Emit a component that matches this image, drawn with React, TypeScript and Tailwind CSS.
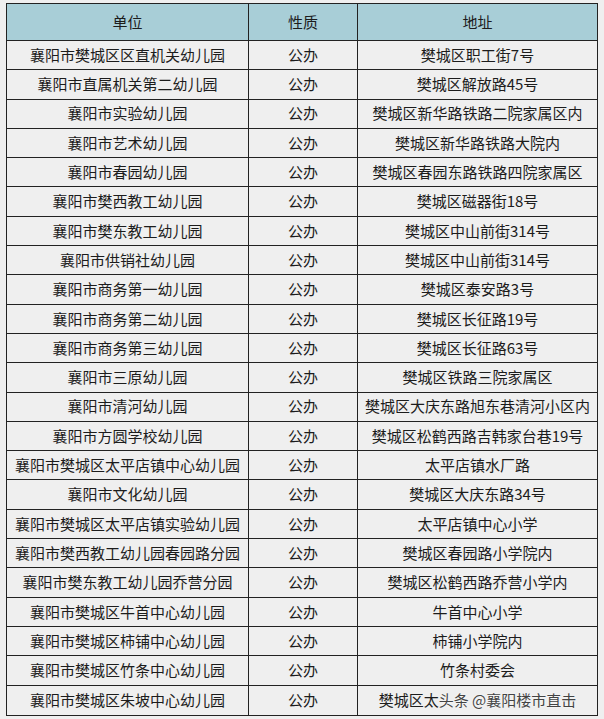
import React from 'react';

const rows: [string, string, string][] = [
  ['襄阳市樊城区区直机关幼儿园', '公办', '樊城区职工街7号'],
  ['襄阳市直属机关第二幼儿园', '公办', '樊城区解放路45号'],
  ['襄阳市实验幼儿园', '公办', '樊城区新华路铁路二院家属区内'],
  ['襄阳市艺术幼儿园', '公办', '樊城区新华路铁路大院内'],
  ['襄阳市春园幼儿园', '公办', '樊城区春园东路铁路四院家属区'],
  ['襄阳市樊西教工幼儿园', '公办', '樊城区磁器街18号'],
  ['襄阳市樊东教工幼儿园', '公办', '樊城区中山前街314号'],
  ['襄阳市供销社幼儿园', '公办', '樊城区中山前街314号'],
  ['襄阳市商务第一幼儿园', '公办', '樊城区泰安路3号'],
  ['襄阳市商务第二幼儿园', '公办', '樊城区长征路19号'],
  ['襄阳市商务第三幼儿园', '公办', '樊城区长征路63号'],
  ['襄阳市三原幼儿园', '公办', '樊城区铁路三院家属区'],
  ['襄阳市清河幼儿园', '公办', '樊城区大庆东路旭东巷清河小区内'],
  ['襄阳市方圆学校幼儿园', '公办', '樊城区松鹤西路吉韩家台巷19号'],
  ['襄阳市樊城区太平店镇中心幼儿园', '公办', '太平店镇水厂路'],
  ['襄阳市文化幼儿园', '公办', '樊城区大庆东路34号'],
  ['襄阳市樊城区太平店镇实验幼儿园', '公办', '太平店镇中心小学'],
  ['襄阳市樊西教工幼儿园春园路分园', '公办', '樊城区春园路小学院内'],
  ['襄阳市樊东教工幼儿园乔营分园', '公办', '樊城区松鹤西路乔营小学内'],
  ['襄阳市樊城区牛首中心幼儿园', '公办', '牛首中心小学'],
  ['襄阳市樊城区柿铺中心幼儿园', '公办', '柿铺小学院内'],
  ['襄阳市樊城区竹条中心幼儿园', '公办', '竹条村委会'],
  ['襄阳市樊城区朱坡中心幼儿园', '公办', '樊城区太'],
];

const font = { fontFamily: '"Noto Sans CJK SC", "Liberation Sans", sans-serif' };

export default function App() {
  return (
    <div className="relative w-[604px] h-[719px] overflow-hidden bg-[#efefef] pt-[3px] pl-[6px] text-[15px] text-[#1c1c1c]" style={font}>
      <div className="relative w-[592px] border border-[#222]">
        <div className="flex h-[37px] bg-[#a8ced7] border-b border-[#222]">
          <div className="w-[242px] flex items-center justify-center border-r border-[#222]">单位</div>
          <div className="w-[109px] flex items-center justify-center border-r border-[#222]">性质</div>
          <div className="flex-1 flex items-center justify-center">地址</div>
        </div>
        {rows.map((r, i) => (
          <div
            key={i}
            className={`flex h-[29.3px] ${i < rows.length - 1 ? 'border-b border-[#222]' : ''}`}
          >
            <div className="w-[242px] flex items-center justify-center border-r border-[#222] whitespace-nowrap">{r[0]}</div>
            <div className="w-[109px] flex items-center justify-center border-r border-[#222]">{r[1]}</div>
            <div className="flex-1 flex items-center justify-center whitespace-nowrap">
              {r[2]}
              {i === rows.length - 1 && (
                <span className="text-[#444] [text-shadow:0_0_2px_#fff]">头条 @襄阳楼市直击</span>
              )}
            </div>
          </div>
        ))}
      </div>
    </div>
  );
}
